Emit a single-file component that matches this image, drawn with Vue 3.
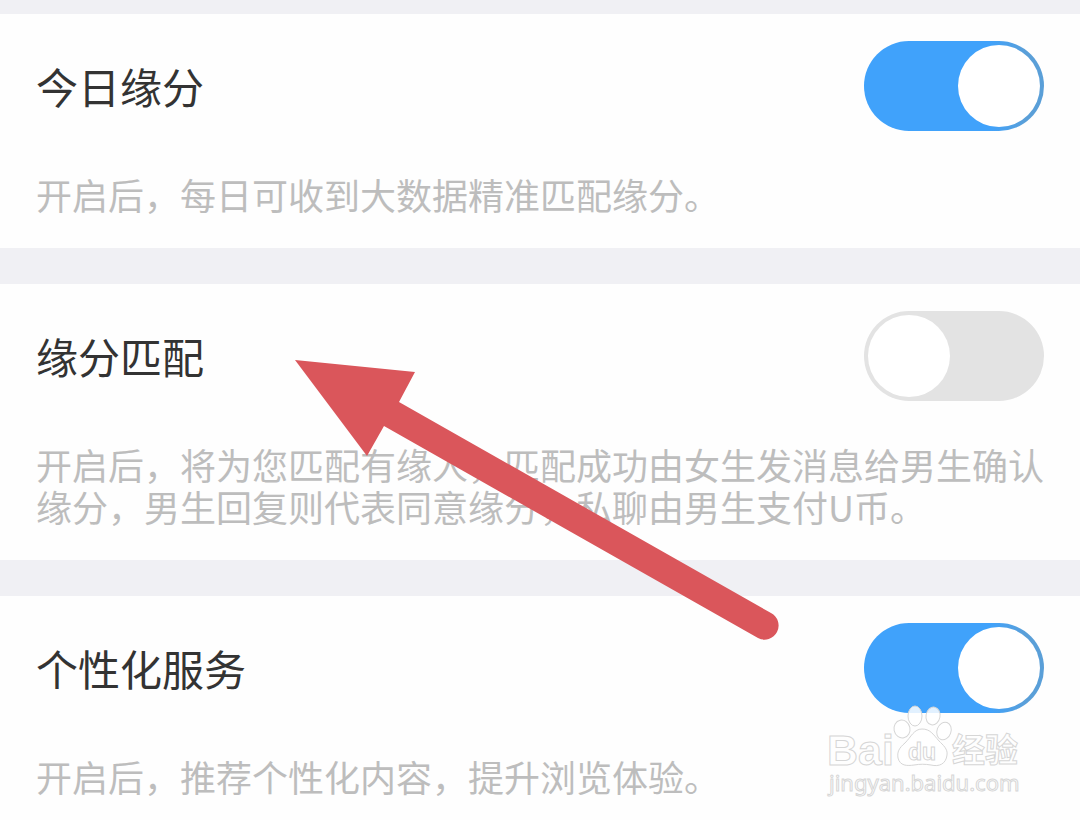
<script setup>
import { reactive } from 'vue'

const settings = reactive([
  { id: 'today', title: '今日缘分', desc: '开启后，每日可收到大数据精准匹配缘分。', on: true },
  {
    id: 'match',
    title: '缘分匹配',
    desc: '开启后，将为您匹配有缘人，匹配成功由女生发消息给男生确认缘分，男生回复则代表同意缘分，私聊由男生支付U币。',
    on: false
  },
  { id: 'personal', title: '个性化服务', desc: '开启后，推荐个性化内容，提升浏览体验。', on: true }
])
</script>

<template>
  <main class="page">
    <section v-for="item in settings" :key="item.id" class="card">
      <div class="row">
        <label class="title" :for="item.id">{{ item.title }}</label>
        <input :id="item.id" v-model="item.on" class="switch" type="checkbox" role="switch" :aria-describedby="item.id + '-desc'" />
      </div>
      <p :id="item.id + '-desc'" class="desc">{{ item.desc }}</p>
    </section>

    <svg class="arrow" width="490" height="286" viewBox="0 0 490 286" aria-hidden="true">
      <path d="M4 2 L124 14 L108 44 L480 255 A14 14 0 0 1 467 280 L93 68 L76 98 Z" />
    </svg>

    <svg class="mark" width="210" height="104" viewBox="820 698 210 104" role="img" aria-label="Baidu 经验">
      <g class="ink">
        <ellipse cx="902" cy="729" rx="8" ry="9" transform="rotate(-12 902 729)" />
        <ellipse cx="915" cy="716" rx="7" ry="10" />
        <ellipse cx="933" cy="716" rx="7" ry="9" transform="rotate(10 933 716)" />
        <ellipse cx="944" cy="731" rx="7" ry="9" transform="rotate(20 944 731)" />
        <path d="M922 729 C914 729 911 737 905 743 C899 748 897 752 898 758 C900 766 907 766 914 765 C920 764 925 764 931 765 C939 767 946 764 947 755 C948 749 943 745 939 741 C933 734 930 729 922 729 Z" />
        <text class="latin" x="827" y="765" font-size="43">Bai</text>
        <text class="latin" x="908" y="760" font-size="23">du</text>
        <text class="han" x="952" y="762" font-size="33">经验</text>
        <text class="url" x="829" y="791" font-size="22">jingyan.baidu.com</text>
      </g>
    </svg>
  </main>
</template>

<style>
html {
  scrollbar-width: none;
  background: #f0f0f4;
}
body {
  margin: 0;
}
</style>

<style scoped>
.page {
  position: relative;
  display: flex;
  flex-direction: column;
  gap: 36px;
  padding-top: 14px;
  font-family: "Noto Sans CJK SC", "Noto Sans", sans-serif;
}
.card {
  padding: 27px 36px 33px;
  background: #fefefe;
}
.row {
  display: flex;
  align-items: center;
  justify-content: space-between;
  margin-bottom: 42px;
}
.title {
  color: #333;
  font-size: 42px;
  line-height: 60px;
}
.desc {
  margin: 0;
  color: #bdbdbd;
  font-size: 36px;
  font-weight: 400;
  line-height: 42px;
}
.switch {
  appearance: none;
  display: flex;
  flex: none;
  box-sizing: border-box;
  width: 180px;
  height: 90px;
  margin: 0;
  padding: 4px;
  border-radius: 45px;
  background: #e3e3e3;
  cursor: pointer;
}
.switch::before {
  content: "";
  width: 82px;
  height: 82px;
  border-radius: 50%;
  background: #fff;
}
.switch:checked {
  justify-content: flex-end;
  background: linear-gradient(90deg, #40a2fb 70%, #5a9fd8 90%);
}
.arrow {
  position: absolute;
  top: 358px;
  left: 291px;
  fill: #da565b;
  pointer-events: none;
}
.mark {
  position: absolute;
  top: 698px;
  right: 50px;
  pointer-events: none;
}
.ink {
  fill: rgba(255, 255, 255, 0.85);
  stroke: #d6d6d6;
  stroke-width: 1;
}
.latin {
  font-family: "Liberation Sans", Arial, sans-serif;
  font-weight: 700;
}
.han {
  font-family: "Noto Sans CJK SC", sans-serif;
  font-weight: 700;
}
.url {
  font-family: "Noto Sans", sans-serif;
}
</style>
